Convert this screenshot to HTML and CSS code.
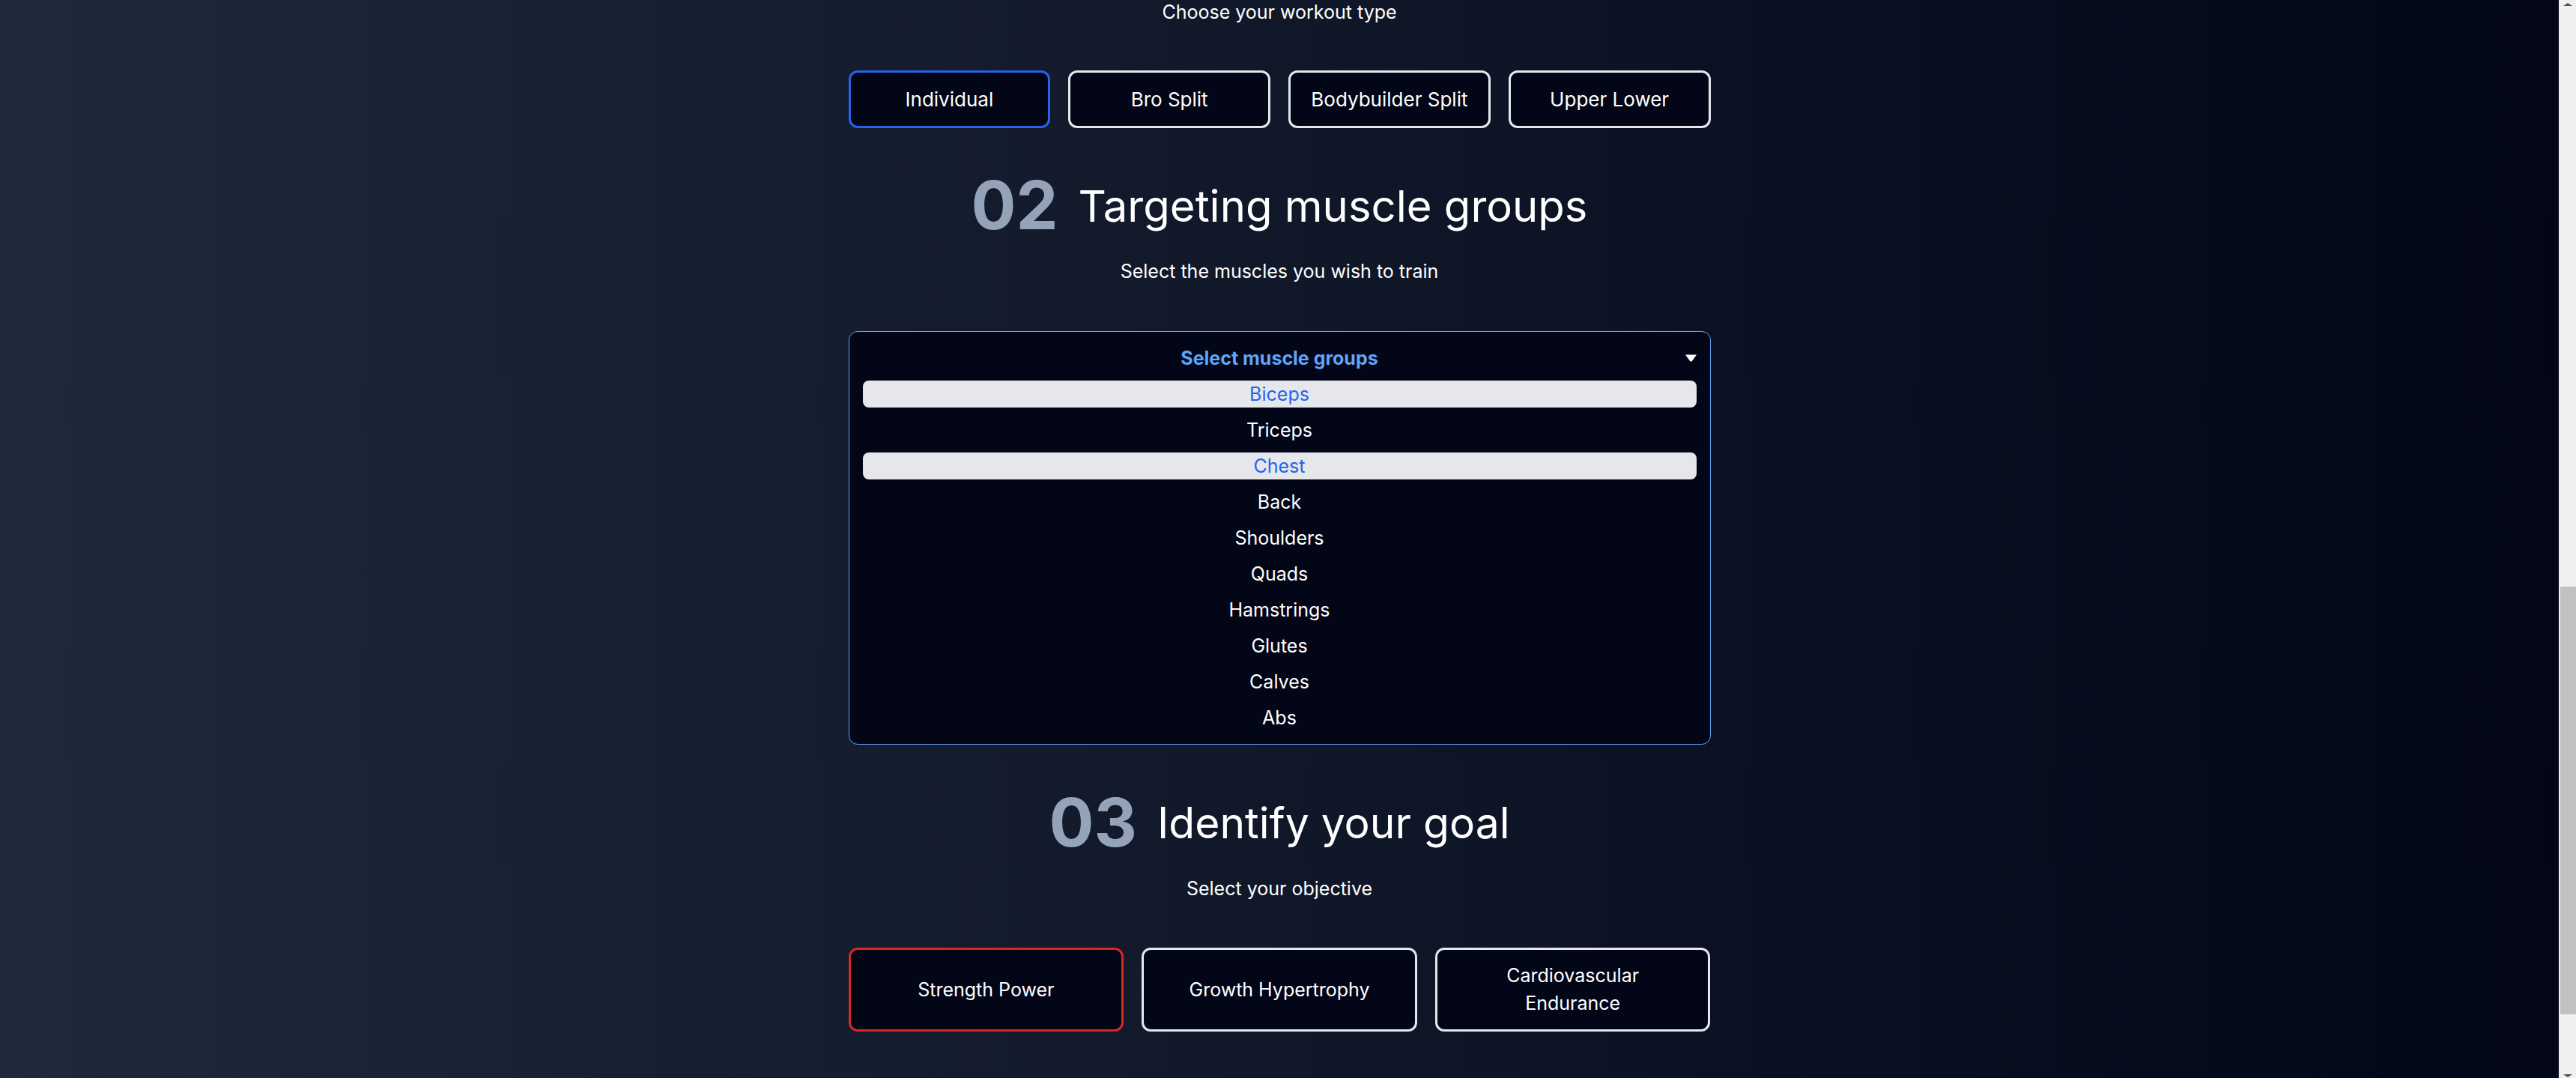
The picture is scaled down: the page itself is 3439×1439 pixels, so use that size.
FILE: index.html
```html
<!DOCTYPE html>
<html lang="en">
<head>
<meta charset="utf-8">
<title>Workout Generator</title>
<link rel="stylesheet" href="styles.css">
</head>
<body>
<div class="window">
  <main class="main">
    <div class="content">
      <p class="sub first">Choose your workout type</p>
      <div class="types">
        <button class="opt active">Individual</button>
        <button class="opt">Bro Split</button>
        <button class="opt">Bodybuilder Split</button>
        <button class="opt">Upper Lower</button>
      </div>

      <h2 class="heading"><span class="num">02</span><span class="title">Targeting muscle groups</span></h2>
      <p class="sub">Select the muscles you wish to train</p>
      <div class="dropdown">
        <div class="dd-head">
          <span></span>
          <span class="dd-label">Select muscle groups</span>
          <svg class="caret" width="15" height="10" viewBox="0 0 15 10"><polygon points="0,0.5 15,0.5 8.5,9.5 6.5,9.5" fill="#ffffff"/></svg>
        </div>
        <div class="mg selected">Biceps</div>
        <div class="mg">Triceps</div>
        <div class="mg selected">Chest</div>
        <div class="mg">Back</div>
        <div class="mg">Shoulders</div>
        <div class="mg">Quads</div>
        <div class="mg">Hamstrings</div>
        <div class="mg">Glutes</div>
        <div class="mg">Calves</div>
        <div class="mg">Abs</div>
      </div>

      <h2 class="heading h3"><span class="num">03</span><span class="title">Identify your goal</span></h2>
      <p class="sub">Select your objective</p>
      <div class="goals">
        <button class="goal red">Strength Power</button>
        <button class="goal">Growth Hypertrophy</button>
        <button class="goal">Cardiovascular Endurance</button>
      </div>
    </div>
  </main>
  <div class="scrollbar">
    <div class="arrow up"></div>
    <div class="track"><div class="thumb"></div></div>
    <div class="arrow down"></div>
  </div>
</div>
</body>
</html>
```
FILE: styles.css
```css
html, body {
  margin: 0;
  padding: 0;
  height: 100%;
  overflow: hidden;
}
body {
  font-family: Inter, "Noto Sans", "Liberation Sans", sans-serif;
  color: #ffffff;
}
.window {
  display: flex;
  height: 1439px;
}
.main {
  flex: 1;
  background: linear-gradient(to right, #1e293b, #020617);
  overflow: hidden;
}
.content {
  width: 1151px;
  margin: -4px auto 0;
  display: flex;
  flex-direction: column;
  align-items: stretch;
}
.sub {
  margin: 0;
  font-size: 25px;
  line-height: 40px;
  text-align: center;
  color: #ffffff;
}
.types {
  margin-top: 58px;
  display: grid;
  grid-template-columns: repeat(4, 1fr);
  gap: 24px;
}
.opt, .goal {
  font-family: inherit;
  background: #020617;
  color: #ffffff;
  border: 3px solid #e5e7eb;
  border-radius: 12px;
  font-size: 26px;
  cursor: pointer;
}
.opt {
  height: 77px;
}
.opt.active {
  border-color: #2563eb;
}
.heading {
  margin: 57px 0 0;
  display: flex;
  justify-content: center;
  align-items: center;
  gap: 27px;
  font-weight: 400;
}
.heading.h3 {
  margin-top: 58px;
}
.num {
  font-size: 89px;
  line-height: 92px;
  font-weight: 700;
  color: #94a3b8;
}
.title {
  font-size: 58px;
  line-height: 60px;
  color: #ffffff;
  padding-top: 2px;
}
.h3 .title {
  font-size: 57px;
}
.heading + .sub {
  margin-top: 22px;
}
.dropdown {
  margin-top: 60px;
  background: #020617;
  border: 1px solid #60a5fa;
  border-radius: 12px;
  padding: 17px 18px;
  display: flex;
  flex-direction: column;
  gap: 12px;
}
.dd-head {
  display: grid;
  grid-template-columns: 1fr auto 1fr;
  align-items: center;
  height: 36px;
}
.dd-label {
  font-weight: 700;
  font-size: 25px;
  color: #60a5fa;
}
.caret {
  justify-self: end;
}
.mg {
  height: 36px;
  line-height: 36px;
  text-align: center;
  font-size: 25px;
  border-radius: 8px;
  color: #ffffff;
}
.mg.selected {
  background: #e5e7eb;
  color: #2563eb;
}
.goals {
  margin-top: 59px;
  display: grid;
  grid-template-columns: repeat(3, 1fr);
  gap: 24px;
}
.goal {
  height: 112px;
  padding: 0 40px;
  line-height: 37px;
  font-size: 25px;
}
.goal.red {
  border-color: #dc2626;
}
.scrollbar {
  width: 23px;
  background: #f0f0f0;
  display: flex;
  flex-direction: column;
}
.arrow {
  height: 17px;
  display: flex;
  justify-content: center;
  align-items: center;
}
.arrow::before {
  content: "";
  width: 0;
  height: 0;
  border-left: 6px solid transparent;
  border-right: 6px solid transparent;
}
.arrow.up::before {
  border-bottom: 4px solid #505050;
  margin-top: -6px;
}
.arrow.down::before {
  border-top: 4px solid #505050;
  margin-top: 10px;
}
.track {
  flex: 1;
  display: flex;
  flex-direction: column;
  padding-top: 766px;
}
.thumb {
  height: 571px;
  margin-left: 2px;
  background: #c1c1c1;
}
```
